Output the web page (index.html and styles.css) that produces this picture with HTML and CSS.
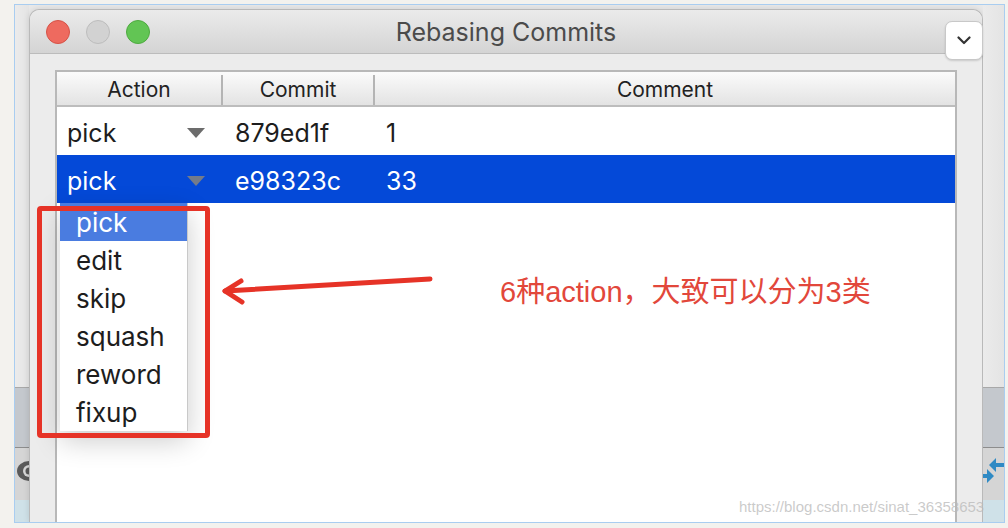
FILE: index.html
```html
<!DOCTYPE html>
<html lang="zh-CN">
<head>
  <meta charset="UTF-8">
  <title>Rebasing Commits</title>
  <link rel="stylesheet" href="styles.css">
</head>
<body>
  <div class="frame">
    <div class="strip strip-left">
      <div class="strip-top"></div>
      <div class="strip-band"></div>
      <div class="strip-tool">
        <svg class="eye" width="14" height="22" viewBox="0 0 14 22"><ellipse cx="14" cy="11" rx="12" ry="10" fill="#5a5a5a"/><circle cx="14" cy="11" r="6" fill="#d6d6d6"/><circle cx="14" cy="11" r="3.5" fill="#5a5a5a"/></svg>
      </div>
      <div class="strip-bottom"></div>
    </div>

    <div class="window">
      <div class="titlebar">
        <div class="lights">
          <span class="light red"></span>
          <span class="light gray"></span>
          <span class="light green"></span>
        </div>
        <div class="title">Rebasing Commits</div>
        <div></div>
      </div>

      <div class="window-body">
        <div class="table">
          <div class="thead">
            <div class="th">Action</div>
            <div class="th sep">Commit</div>
            <div class="th sep">Comment</div>
          </div>
          <div class="row">
            <div class="cell action"><span>pick</span><span class="tri"></span></div>
            <div class="cell commit">879ed1f</div>
            <div class="cell comment">1</div>
          </div>
          <div class="row selected">
            <div class="cell action"><span>pick</span><span class="tri"></span></div>
            <div class="cell commit">e98323c</div>
            <div class="cell comment">33</div>
          </div>
        </div>
      </div>
    </div>

    <div class="strip strip-right">
      <div class="strip-top"></div>
      <div class="strip-band"></div>
      <div class="strip-tool">
        <svg class="arrows" width="21" height="32" viewBox="0 0 21 32"><path d="M21 8 L13 8 L13 3 L6 10 L13 17 L13 12 L21 12 Z" fill="#2f8ac4"/><path d="M0 19 L4 19 L4 14 L11 21 L4 28 L4 23 L0 23 Z" fill="#2f8ac4"/></svg>
      </div>
      <div class="strip-bottom"></div>
    </div>
  </div>

  <!-- popup and annotations over the window -->
  <button class="chevron-btn">
    <svg width="14" height="9" viewBox="0 0 14 9"><path d="M1.5 1.5 L7 7 L12.5 1.5" fill="none" stroke="#333" stroke-width="2.2" stroke-linecap="round" stroke-linejoin="round"/></svg>
  </button>

  <div class="menu">
    <div class="menu-item active">pick</div>
    <div class="menu-item">edit</div>
    <div class="menu-item">skip</div>
    <div class="menu-item">squash</div>
    <div class="menu-item">reword</div>
    <div class="menu-item">fixup</div>
  </div>

  <div class="mark-box"></div>
  <svg class="mark-arrow" width="230" height="40" viewBox="215 270 230 40">
    <path d="M430 279 L225 291" fill="none" stroke="#e63327" stroke-width="5" stroke-linecap="round"/>
    <path d="M241 281 L225 291 L242 302" fill="none" stroke="#e63327" stroke-width="5" stroke-linecap="round" stroke-linejoin="round"/>
  </svg>
  <div class="mark-text">6种action，大致可以分为3类</div>

  <div class="watermark">https://blog.csdn.net/sinat_36358653</div>
</body>
</html>
```

FILE: styles.css
```css
* {
  box-sizing: border-box;
  margin: 0;
  padding: 0;
}

body {
  background-color: #f3f2ee;
  font-family: 'Inter', 'Noto Sans CJK SC', sans-serif;
  padding: 4px 0 0 14px;
  position: relative;
  width: 1008px;
  height: 528px;
  overflow: hidden;
}

.frame {
  width: 991px;
  height: 519px;
  border: 1px solid #a9cdf0;
  display: flex;
  overflow: hidden;
  background-color: #e9e9e9;
}

/* app panels behind the dialog */
.strip {
  display: flex;
  flex-direction: column;
}

.strip-left {
  width: 14px;
}

.strip-right {
  flex: 1;
}

.strip-top {
  height: 382px;
  background: linear-gradient(to right, #ebebeb, #e4e4e4);
}

.strip-band {
  height: 61px;
  background-color: #c4c8cd;
  border-top: 1px solid #a8a8a8;
  border-bottom: 1px solid #8d8d8d;
}

.strip-tool {
  height: 52px;
  background-color: #d5d5d5;
  display: flex;
  align-items: center;
  padding-bottom: 6px;
}

.strip-left .strip-tool {
  justify-content: flex-end;
}

.strip-bottom {
  flex: 1;
  background-color: #cfe1e8;
}

/* dialog */
.window {
  width: 954px;
  margin-top: 4px;
  border: 1px solid #b9b9b9;
  border-bottom: none;
  border-radius: 10px 10px 0 0;
  background-color: #ececec;
  display: flex;
  flex-direction: column;
  box-shadow: 0 0 6px rgba(0, 0, 0, 0.12);
}

.titlebar {
  height: 44px;
  border-radius: 10px 10px 0 0;
  background: linear-gradient(#ebebeb, #d4d4d4);
  border-bottom: 1px solid #bcbcbc;
  display: grid;
  grid-template-columns: 1fr auto 1fr;
  align-items: center;
}

.lights {
  display: flex;
  gap: 16px;
  padding-left: 16px;
}

.light {
  width: 24px;
  height: 24px;
  border-radius: 50%;
}

.light.red {
  background-color: #ee6a5f;
  border: 1px solid #d65247;
}

.light.gray {
  background-color: #d2d2d2;
  border: 1px solid #bdbdbd;
}

.light.green {
  background-color: #62c554;
  border: 1px solid #4eaa40;
}

.title {
  font-size: 25px;
  color: #4b4b4b;
  padding-top: 1px;
}

.window-body {
  flex: 1;
  padding: 16px 25px 0 25px;
  display: flex;
}

.table {
  flex: 1;
  background-color: white;
  border: 2px solid #b8b8b8;
  border-bottom: none;
}

.thead,
.row {
  display: grid;
  grid-template-columns: 164px 152px 1fr;
}

.thead {
  height: 35px;
  padding: 3px 0;
  background: linear-gradient(#fbfbfb, #e3e3e3);
  border-bottom: 2px solid #bdbdbd;
}

.th {
  font-size: 21px;
  color: #222;
  text-align: center;
  line-height: 30px;
}

.th.sep {
  border-left: 2px solid #b4b4b4;
}

.row {
  height: 48px;
  padding-top: 3px;
  align-items: center;
  font-size: 25px;
  color: #1d1d1d;
}

.row.selected {
  background-color: #0449d8;
  color: white;
}

.cell.action {
  display: flex;
  justify-content: space-between;
  align-items: center;
  padding: 0 16px 0 10px;
}

.tri {
  width: 0;
  height: 0;
  border-left: 9px solid transparent;
  border-right: 9px solid transparent;
  border-top: 10px solid #6c6c6c;
}

.row.selected .tri {
  border-top-color: #737b8a;
}

.cell.commit {
  padding-left: 14px;
}

.cell.comment {
  padding-left: 13px;
}

.chevron-btn {
  position: absolute;
  left: 945px;
  top: 21px;
  width: 38px;
  height: 39px;
  background-color: white;
  border: 1px solid #c8c8c8;
  border-radius: 7px;
  box-shadow: 0 1px 2px rgba(0, 0, 0, 0.15);
  display: flex;
  align-items: center;
  justify-content: center;
}

/* popup list */
.menu {
  position: absolute;
  left: 60px;
  top: 203px;
  width: 128px;
  background-color: white;
  border-right: 1px solid #c9c9c9;
  box-shadow: 0 10px 26px rgba(0, 0, 0, 0.2);
}

.menu-item {
  height: 38px;
  line-height: 40px;
  padding-left: 16px;
  font-size: 26px;
  color: #1d1d1d;
}

.menu-item.active {
  background-color: #4a7ce0;
  color: white;
}

/* annotations */
.mark-box {
  position: absolute;
  left: 37px;
  top: 206px;
  width: 173px;
  height: 232px;
  border: 5px solid #e63327;
  border-radius: 4px;
}

.mark-arrow {
  position: absolute;
  left: 215px;
  top: 270px;
}

.mark-text {
  position: absolute;
  left: 500px;
  top: 268px;
  font-family: 'Liberation Sans', 'Noto Sans CJK SC', sans-serif;
  font-size: 29px;
  color: #e2473b;
}

.watermark {
  position: absolute;
  left: 739px;
  top: 498px;
  font-family: 'Liberation Sans', sans-serif;
  font-size: 15px;
  color: rgba(185, 185, 185, 0.75);
}
```
